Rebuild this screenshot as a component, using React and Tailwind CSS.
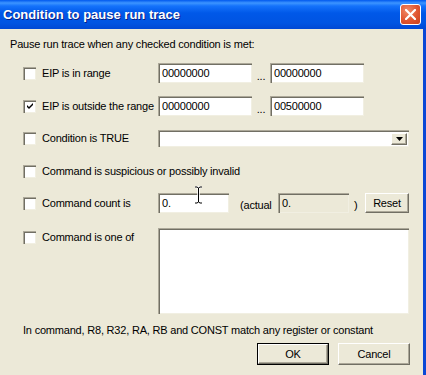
import React from "react";

const font = { fontFamily: '"Liberation Sans", Arial, sans-serif' };

// sunken 3D edit box
const sunken =
  "bg-white border-t border-l border-[#aca899] border-b-white border-r-white shadow-[inset_1px_1px_0_#716f64,inset_-1px_-1px_0_#f1efe2]";

// raised 3D button
const raised =
  "bg-[#ece9d8] border-t border-l border-white border-b border-r border-b-[#716f64] border-r-[#716f64] shadow-[inset_-1px_-1px_0_#aca899]";

const CheckBox = ({ checked }) => (
  <div className="w-[13px] h-[13px] flex-none bg-white border-t border-l border-[#aca899] border-b-white border-r-white shadow-[inset_1px_1px_0_#716f64,inset_-1px_-1px_0_#f1efe2] flex items-center justify-center">
    {checked && (
      <svg width="7" height="7" viewBox="0 0 7 7">
        <path d="M0 2 L2 4 L6 0 L6 2 L2 6 L0 4 Z" fill="#000" />
      </svg>
    )}
  </div>
);

const Label = ({ children, w }) => (
  <span className={`ml-[6px] text-[11px] leading-[13px] text-black whitespace-nowrap ${w || ""}`}>
    {children}
  </span>
);

const Edit = ({ value, w, gray }) => (
  <div
    className={`h-[20px] ${w} flex items-center px-[3px] text-[11px] text-black ${
      gray
        ? "bg-[#ece9d8] border-t border-l border-[#aca899] border-b-white border-r-white shadow-[inset_1px_1px_0_#716f64,inset_-1px_-1px_0_#f1efe2]"
        : sunken
    }`}
  >
    {value}
  </div>
);

export default function App() {
  return (
    <div className="w-[426px] h-[375px] flex flex-col bg-[#ece9d8] overflow-hidden relative tracking-[-0.2px]" style={font}>
      {/* title bar */}
      <div className="h-[29px] flex-none flex items-center justify-between pl-[3px] pr-[5px] bg-[linear-gradient(to_bottom,#0058ee_0px,#3d95ff_3px,#1472fb_6px,#0058e8_45%,#0054e2_80%,#0048d4_100%)]">
        <span className="text-white font-bold text-[13px] tracking-[0px] [text-shadow:1px_1px_0_#0a1f82]">
          Condition to pause run trace
        </span>
        <div className="w-[21px] h-[21px] rounded-[3px] border border-white bg-[radial-gradient(circle_at_35%_30%,#f08a68,#e05530_55%,#c8401c)] flex items-center justify-center">
          <svg width="11" height="11" viewBox="0 0 11 11">
            <path d="M1 1 L10 10 M10 1 L1 10" stroke="#fff" strokeWidth="2.2" strokeLinecap="square" />
          </svg>
        </div>
      </div>

      {/* body */}
      <div className="flex-1 flex flex-col border-r-[3px] border-[#0a47d6] pl-[23px] pr-[13px]">
        <div className="pt-[9px] -ml-[13px] text-[11px] leading-[13px] text-black">
          Pause run trace when any checked condition is met:
        </div>

        <div className="mt-[12px] h-[20px] flex items-center">
          <CheckBox />
          <Label w="w-[116px]">EIP is in range</Label>
          <Edit value="00000000" w="w-[94px]" />
          <span className="w-[18px] self-end text-center text-[11px] leading-[13px]">...</span>
          <Edit value="00000000" w="w-[94px]" />
        </div>

        <div className="mt-[13px] h-[20px] flex items-center">
          <CheckBox checked />
          <Label w="w-[116px]">EIP is outside the range</Label>
          <Edit value="00000000" w="w-[94px]" />
          <span className="w-[18px] self-end text-center text-[11px] leading-[13px]">...</span>
          <Edit value="00500000" w="w-[94px]" />
        </div>

        <div className="mt-[14px] h-[17px] flex items-center">
          <CheckBox />
          <Label w="w-[116px]">Condition is TRUE</Label>
          <div className={`h-[17px] w-[251px] flex items-center justify-end pr-[2px] ${sunken}`}>
            <div className={`w-[16px] h-[12px] flex items-center justify-center ${raised}`}>
              <svg width="7" height="4" viewBox="0 0 7 4">
                <path d="M0 0 H7 L3.5 4 Z" fill="#000" />
              </svg>
            </div>
          </div>
        </div>

        <div className="mt-[14px] h-[20px] flex items-center">
          <CheckBox />
          <Label>Command is suspicious or possibly invalid</Label>
        </div>

        <div className="mt-[12px] h-[20px] flex items-center">
          <CheckBox />
          <Label w="w-[116px]">Command count is</Label>
          <Edit value="0." w="w-[71px]" />
          <span className="ml-[11px] w-[38px] text-[11px] leading-[13px] pt-[4px]">(actual</span>
          <Edit value="0." w="w-[71px]" gray />
          <span className="ml-[5px] w-[11px] text-[11px] leading-[13px] pt-[4px]">)</span>
          <button className={`w-[44px] h-[20px] text-[11px] text-black ${raised}`}>Reset</button>
        </div>

        <div className="mt-[15px] flex items-start">
          <div className="mt-[3px] flex items-center">
            <CheckBox />
            <Label w="w-[116px]">Command is one of</Label>
          </div>
          <div className={`w-[251px] h-[86px] ${sunken}`} />
        </div>

        <div className="mt-[10px] text-[11px] leading-[13px] text-black whitespace-nowrap">
          In command, R8, R32, RA, RB and CONST match any register or constant
        </div>

        <div className="mt-[6px] flex justify-end gap-[9px]">
          <div className="border border-black">
            <button className={`w-[70px] h-[20px] text-[11px] text-black block ${raised}`}>OK</button>
          </div>
          <button className={`w-[72px] h-[22px] text-[11px] text-black ${raised}`}>Cancel</button>
        </div>
      </div>

      {/* I-beam mouse cursor over the count field */}
      <svg className="absolute left-[194px] top-[186px]" width="9" height="18" viewBox="0 0 9 18">
        <path d="M1 1 H3 L4.5 2 L6 1 H8 M4.5 2 V16 M1 17 H3 L4.5 16 L6 17 H8" stroke="#fff" strokeWidth="2.5" fill="none" />
        <path d="M1 1 H3 L4.5 2 L6 1 H8 M4.5 2 V16 M1 17 H3 L4.5 16 L6 17 H8" stroke="#000" strokeWidth="1" fill="none" />
      </svg>
    </div>
  );
}
